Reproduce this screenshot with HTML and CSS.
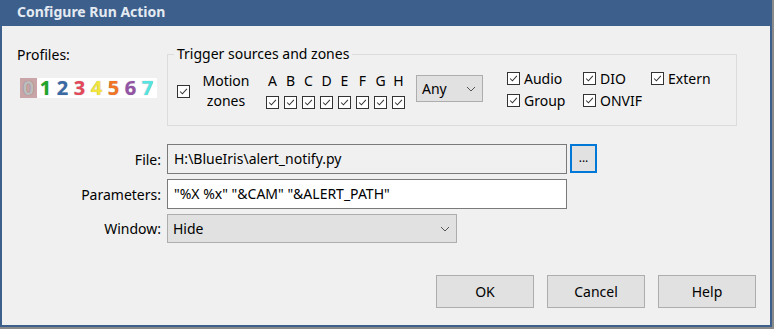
FILE: index.html
```html
<!DOCTYPE html>
<html lang="en">
	<head>
		<meta charset="UTF-8" />
		<meta name="viewport" content="width=device-width, initial-scale=1.0" />
		<title>Configure Run Action</title>
		<link rel="stylesheet" href="styles.css">
	</head>
	<body>
		<div class="window">
			<div class="titlebar">Configure Run Action</div>
			<div class="content">
				<div class="top">
					<div class="profiles">
						<div class="profiles-label">Profiles:</div>
						<div class="digits">
							<span class="d d0">0</span><span class="d d1">1</span><span class="d d2">2</span><span class="d d3">3</span><span class="d d4">4</span><span class="d d5">5</span><span class="d d6">6</span><span class="d d7">7</span>
						</div>
					</div>
					<fieldset class="group">
						<legend>Trigger sources and zones</legend>
						<div class="motion">
							<span class="cb"><svg viewBox="0 0 13 13"><path d="M2.5 6.5 L5.2 9.2 L10.5 3.5" /></svg></span>
							<div class="motion-text">Motion<br>zones</div>
						</div>
						<div class="zones">
							<div class="zone"><span>A</span><span class="cb"><svg viewBox="0 0 13 13"><path d="M2.5 6.5 L5.2 9.2 L10.5 3.5" /></svg></span></div>
							<div class="zone"><span>B</span><span class="cb"><svg viewBox="0 0 13 13"><path d="M2.5 6.5 L5.2 9.2 L10.5 3.5" /></svg></span></div>
							<div class="zone"><span>C</span><span class="cb"><svg viewBox="0 0 13 13"><path d="M2.5 6.5 L5.2 9.2 L10.5 3.5" /></svg></span></div>
							<div class="zone"><span>D</span><span class="cb"><svg viewBox="0 0 13 13"><path d="M2.5 6.5 L5.2 9.2 L10.5 3.5" /></svg></span></div>
							<div class="zone"><span>E</span><span class="cb"><svg viewBox="0 0 13 13"><path d="M2.5 6.5 L5.2 9.2 L10.5 3.5" /></svg></span></div>
							<div class="zone"><span>F</span><span class="cb"><svg viewBox="0 0 13 13"><path d="M2.5 6.5 L5.2 9.2 L10.5 3.5" /></svg></span></div>
							<div class="zone"><span>G</span><span class="cb"><svg viewBox="0 0 13 13"><path d="M2.5 6.5 L5.2 9.2 L10.5 3.5" /></svg></span></div>
							<div class="zone"><span>H</span><span class="cb"><svg viewBox="0 0 13 13"><path d="M2.5 6.5 L5.2 9.2 L10.5 3.5" /></svg></span></div>
						</div>
						<div class="combo any">
							<span>Any</span>
							<svg class="arrow" viewBox="0 0 10 6"><path d="M1 1 L5 5 L9 1" /></svg>
						</div>
						<div class="sources">
							<label class="src"><span class="cb"><svg viewBox="0 0 13 13"><path d="M2.5 6.5 L5.2 9.2 L10.5 3.5" /></svg></span>Audio</label>
							<label class="src"><span class="cb"><svg viewBox="0 0 13 13"><path d="M2.5 6.5 L5.2 9.2 L10.5 3.5" /></svg></span>DIO</label>
							<label class="src"><span class="cb"><svg viewBox="0 0 13 13"><path d="M2.5 6.5 L5.2 9.2 L10.5 3.5" /></svg></span>Extern</label>
							<label class="src"><span class="cb"><svg viewBox="0 0 13 13"><path d="M2.5 6.5 L5.2 9.2 L10.5 3.5" /></svg></span>Group</label>
							<label class="src"><span class="cb"><svg viewBox="0 0 13 13"><path d="M2.5 6.5 L5.2 9.2 L10.5 3.5" /></svg></span>ONVIF</label>
						</div>
					</fieldset>
				</div>

				<div class="form">
					<div class="label">File:</div>
					<div class="file-row">
						<div class="field readonly">H:\BlueIris\alert_notify.py</div>
						<div class="browse">...</div>
					</div>
					<div class="label">Parameters:</div>
					<div class="field params">"%X %x" "&amp;CAM" "&amp;ALERT_PATH"</div>
					<div class="label">Window:</div>
					<div class="combo window-combo">
						<span>Hide</span>
						<svg class="arrow" viewBox="0 0 10 6"><path d="M1 1 L5 5 L9 1" /></svg>
					</div>
				</div>

				<div class="buttons">
					<div class="btn">OK</div>
					<div class="btn">Cancel</div>
					<div class="btn">Help</div>
				</div>
			</div>
		</div>
	</body>
</html>
```

FILE: styles.css
```css
* {
	box-sizing: border-box;
}

body {
	margin: 0;
	background-color: #8a8a8a;
	font-family: 'Noto Sans', 'Open Sans', sans-serif;
	font-size: 14px;
	color: #000;
}

.window {
	width: 772px;
	height: 327px;
	background-color: #f0f0f0;
	border: 2px solid #3d5f8c;
	border-top: none;
	display: flex;
	flex-direction: column;
}

.titlebar {
	height: 26px;
	background-color: #3d5f8c;
	color: #e4eaf1;
	font-weight: bold;
	font-size: 14px;
	line-height: 24px;
	margin: 0 -2px;
	padding-left: 17px;
}

.content {
	flex: 1;
	display: flex;
	flex-direction: column;
}

.top {
	display: flex;
	padding-top: 18px;
}

.profiles {
	width: 165px;
	padding-left: 15px;
}

.profiles-label {
	line-height: 20px;
	margin-top: 1px;
}

.digits {
	display: flex;
	margin-top: 13px;
	margin-left: 3px;
	width: 137px;
	height: 20px;
	background-color: #fff;
}

.d {
	width: 17px;
	text-align: center;
	font-size: 20px;
	font-weight: bold;
	line-height: 20px;
	text-shadow: 0 0 1px rgba(0, 0, 0, 0.35);
}

.d0 { background-color: #c9a5a7; color: #bdbdbd; }
.d1 { color: #1fa52a; }
.d2 { color: #3a6aa6; }
.d3 { color: #e4485a; }
.d4 { color: #f2e43a; }
.d5 { color: #f07424; }
.d6 { color: #9454a6; }
.d7 { color: #56e4e0; }

.group {
	margin: 2px 0 0 0;
	width: 570px;
	height: 80px;
	border: 1px solid #dcdcdc;
	padding: 0 6px 0 9px;
	display: flex;
	align-items: flex-start;
}

.group legend {
	padding: 0 3px;
	margin-left: -3px;
	line-height: 16px;
}

.cb {
	display: inline-block;
	width: 13px;
	height: 13px;
	border: 1px solid #333;
	background-color: #fff;
	flex: none;
}

.cb svg {
	display: block;
	width: 11px;
	height: 11px;
}

.cb path {
	fill: none;
	stroke: #333;
	stroke-width: 1.2;
}

.motion {
	display: flex;
	align-items: center;
	margin-top: 9px;
}

.motion-text {
	text-align: center;
	line-height: 20px;
	margin-left: 12px;
	width: 48px;
}

.zones {
	display: flex;
	margin-left: 16px;
	margin-top: 9px;
}

.zone {
	width: 18px;
	display: flex;
	flex-direction: column;
	align-items: flex-start;
}

.zone span:first-child {
	line-height: 20px;
	width: 13px;
	text-align: center;
}

.zone .cb {
	margin-top: 5px;
}

.combo {
	display: flex;
	align-items: center;
	justify-content: space-between;
	background-color: #e1e1e1;
	border: 1px solid #adadad;
	padding: 0 6px 0 5px;
}

.any {
	width: 67px;
	height: 27px;
	margin-left: 6px;
	margin-top: 13px;
}

.arrow {
	width: 10px;
	height: 6px;
}

.arrow path {
	fill: none;
	stroke: #555;
	stroke-width: 1;
}

.sources {
	display: grid;
	grid-template-columns: 76px 68px auto;
	row-gap: 1px;
	margin-left: 24px;
	margin-top: 6px;
}

.src {
	display: flex;
	align-items: center;
	gap: 4px;
	line-height: 21px;
}

.form {
	display: grid;
	grid-template-columns: 165px auto;
	row-gap: 5px;
	margin-top: 18px;
	align-items: center;
}

.label {
	text-align: right;
	padding-right: 6px;
}

.file-row {
	display: flex;
	gap: 3px;
}

.field {
	width: 400px;
	height: 30px;
	border: 1px solid #7a7a7a;
	background-color: #fff;
	padding-left: 6px;
	line-height: 28px;
}

.readonly {
	background-color: #f0f0f0;
}

.browse {
	width: 27px;
	height: 29px;
	border: 2px solid #0078d7;
	background-color: #e1e1e1;
	text-align: center;
	line-height: 24px;
	font-size: 12px;
}

.window-combo {
	width: 290px;
	height: 29px;
}

.buttons {
	display: flex;
	justify-content: flex-end;
	gap: 13px;
	padding-right: 14px;
	margin-top: 32px;
}

.btn {
	width: 98px;
	height: 33px;
	background-color: #e1e1e1;
	border: 1px solid #adadad;
	text-align: center;
	line-height: 31px;
}
```
